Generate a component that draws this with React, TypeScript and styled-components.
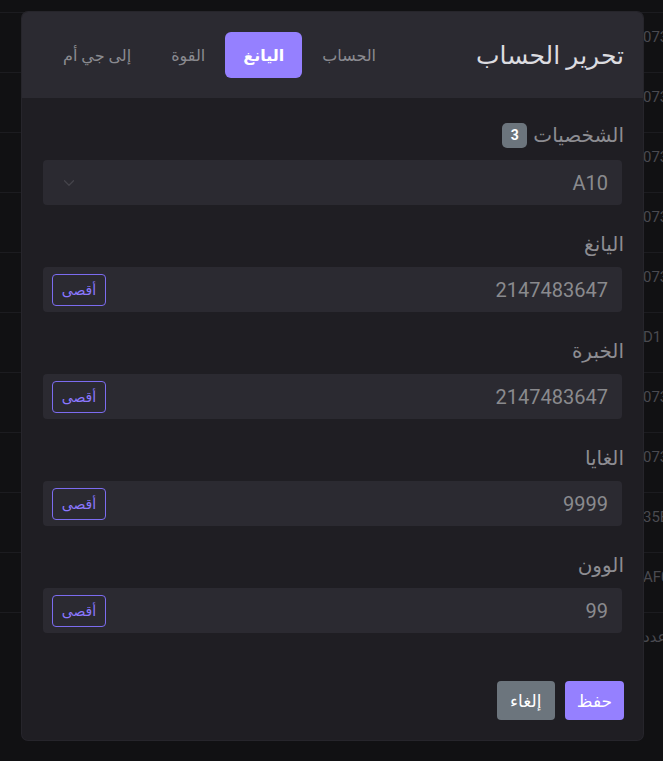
import React from "react";
import styled, { createGlobalStyle } from "styled-components";

const Global = createGlobalStyle`
  html, body { margin: 0; padding: 0; background: #111113; }
  body { font-family: Roboto, "DejaVu Sans", sans-serif; overflow: hidden; }
  * { box-sizing: border-box; }
`;

const Page = styled.div`
  position: relative;
  width: 663px;
  height: 761px;
  overflow: hidden;
  background: #111113;
`;

const Table = styled.div`
  display: flex;
  flex-direction: column;
  padding-top: 12px;
`;

const Row = styled.div`
  height: 60px;
  border-top: 1px solid #1c1c20;
  display: flex;
  align-items: flex-start;
  padding: 15px 0 0 643px;
  white-space: nowrap;
  font-size: 15px;
  color: #4a4a50;
  overflow: hidden;
`;

const Modal = styled.div`
  position: absolute;
  left: 22px;
  top: 12px;
  width: 621px;
  height: 728px;
  direction: rtl;
  background: #1f1e23;
  border-radius: 6px;
  overflow: hidden;
  display: flex;
  flex-direction: column;
  box-shadow: 0 0 0 1px #26252b;
`;

const Header = styled.div`
  height: 86px;
  background: #2b2a31;
  display: flex;
  align-items: center;
  padding: 0 19px 0 21px;
`;

const Title = styled.h2`
  margin: 0;
  font-size: 25px;
  font-weight: 400;
  color: #dcdce0;
  margin-left: auto;
`;

const Tabs = styled.div`
  display: flex;
  align-items: center;
`;

const Tab = styled.button<{ $active?: boolean }>`
  border: 0;
  font-family: inherit;
  font-size: 16px;
  height: 46px;
  padding: 0 ${(p) => (p.$active ? "18px" : "20px")};
  border-radius: 6px;
  cursor: pointer;
  background: ${(p) => (p.$active ? "#9580ff" : "transparent")};
  color: ${(p) => (p.$active ? "#ffffff" : "#8a8a90")};
  font-weight: ${(p) => (p.$active ? 700 : 400)};
`;

const Body = styled.div`
  padding: 22px 19px 0 21px;
  display: flex;
  flex-direction: column;
`;

const Group = styled.div`
  display: flex;
  flex-direction: column;
  margin-bottom: 25px;
`;

const LabelRow = styled.div<{ $tall?: boolean }>`
  display: flex;
  align-items: center;
  gap: 6px;
  height: ${(p) => (p.$tall ? "30px" : "28px")};
  margin-bottom: ${(p) => (p.$tall ? "10px" : "9px")};
  font-size: 20px;
  color: #8d8d92;
`;

const Badge = styled.span`
  display: inline-flex;
  align-items: center;
  justify-content: center;
  min-width: 25px;
  height: 25px;
  border-radius: 5px;
  background: #6c757d;
  color: #fff;
  font-weight: 700;
  font-size: 14px;
  padding: 0 7px;
`;

const Field = styled.div`
  height: 45px;
  width: 579px;
  background: #2b2a31;
  border-radius: 4px;
  display: flex;
  align-items: center;
  padding: 0 14px 0 9px;
  margin-right: 2px;
`;

const Value = styled.span`
  font-size: 20px;
  color: #8a8a8e;
  margin-left: auto;
`;

const MaxButton = styled.button`
  height: 32px;
  width: 54px;
  border: 1px solid #7c6cf0;
  border-radius: 4px;
  background: transparent;
  color: #8b78ff;
  font-family: inherit;
  font-size: 14px;
  padding: 0;
`;

const Chevron = styled.svg`
  margin-left: 8px;
`;

const Footer = styled.div`
  margin-top: auto;
  display: flex;
  gap: 10px;
  padding: 0 19px 20px 0;
`;

const Btn = styled.button<{ $primary?: boolean }>`
  height: 39px;
  min-width: 58px;
  padding: 0 12px;
  border: 0;
  border-radius: 4px;
  font-family: inherit;
  font-size: 17px;
  color: #fff;
  background: ${(p) => (p.$primary ? "#9580ff" : "#6c757d")};
`;

const rows = ["073", "073", "073", "073", "073", "D1", "073", "073", "35E", "AF0", "عدد"];

const fields = [
  { label: "اليانغ", value: "2147483647" },
  { label: "الخبرة", value: "2147483647" },
  { label: "الغايا", value: "9999" },
  { label: "الوون", value: "99" },
];

export default function App() {
  return (
    <Page>
      <Global />
      <Table>
        {rows.map((r, i) => (
          <Row key={i}>{r}</Row>
        ))}
      </Table>
      <Modal>
        <Header>
          <Title>تحرير الحساب</Title>
          <Tabs>
            <Tab>الحساب</Tab>
            <Tab $active>اليانغ</Tab>
            <Tab>القوة</Tab>
            <Tab>إلى جي أم</Tab>
          </Tabs>
        </Header>
        <Body>
          <Group>
            <LabelRow $tall>
              الشخصيات <Badge>3</Badge>
            </LabelRow>
            <Field>
              <Value>A10</Value>
              <Chevron width="18" height="18" viewBox="0 0 24 24" fill="none" stroke="#45444b" strokeWidth="1.6" strokeLinecap="round" strokeLinejoin="round">
                <path d="m6 9 6 6 6-6" />
              </Chevron>
            </Field>
          </Group>
          {fields.map((f) => (
            <Group key={f.label}>
              <LabelRow>{f.label}</LabelRow>
              <Field>
                <Value>{f.value}</Value>
                <MaxButton>أقصى</MaxButton>
              </Field>
            </Group>
          ))}
        </Body>
        <Footer>
          <Btn $primary>حفظ</Btn>
          <Btn>إلغاء</Btn>
        </Footer>
      </Modal>
    </Page>
  );
}
